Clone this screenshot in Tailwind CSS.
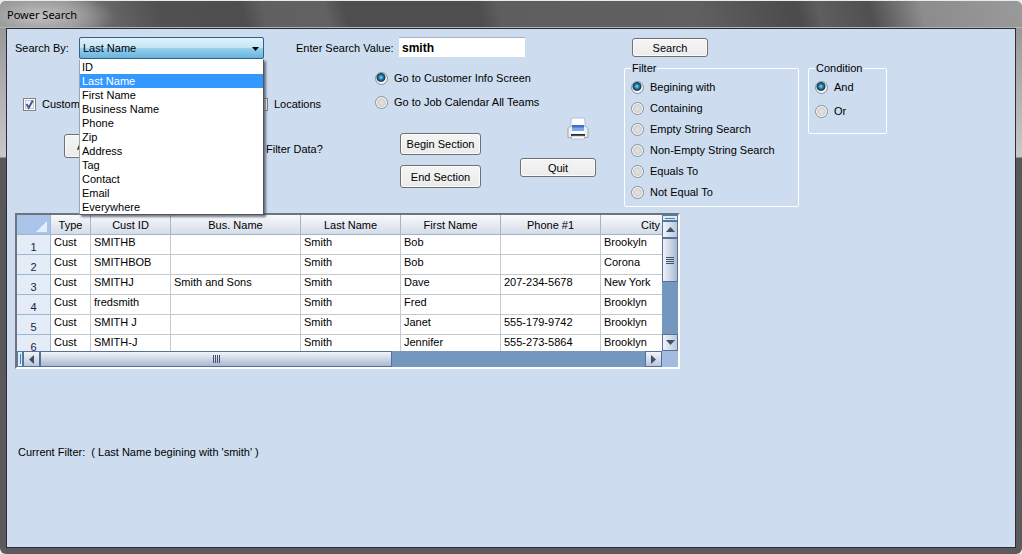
<!DOCTYPE html>
<html lang="en">
<head>
<meta charset="utf-8">
<title>Power Search</title>
<script src="https://cdn.jsdelivr.net/npm/@tailwindcss/browser@4"></script>
</head>
<body class="bg-[#e8eceb] pt-px font-['Liberation_Sans',Arial,sans-serif] text-[11px] leading-[14px] text-black">
<div class="flex min-h-[calc(100vh-1px)] flex-col rounded-md bg-[linear-gradient(#8f8f8f_0,#c8c8c8_156px,#585858_157px,#5c5a5c_100%)] px-[6px] pb-[6px]">
  <header class="-mx-[6px] flex h-[27px] items-center rounded-t-md border-b border-[#b4b4b4] bg-[radial-gradient(ellipse_75px_26px_at_40px_15px,#c0c0c0_0,#a8a8a8cc_50%,#80808000_100%),linear-gradient(75deg,#8c8c8c_0,#888888_7%,#6a6a6a_10%,#505050_16%,#4e4e4e_24%,#606060_26%,#626262_32%,#4e4e4e_34%,#4e4e4e_47%,#5e5e5e_49%,#606060_68%,#4c4c4c_77%,#4c4c4c_78%,#5e5e5e_80%,#505050_85%,#8c8c8c_90%,#9a9a9a_100%)] pt-px pl-[7px]">
    <h1 class="font-['Noto_Sans',sans-serif] text-[11px]">Power Search</h1>
  </header>

  <main class="flex grow flex-col border border-[#2a2e33] bg-[#cdddef] px-2 pt-2">
    <div class="flex">
      <section class="w-[609px] shrink-0">
        <div class="flex h-[22px] items-center">
          <label for="by" class="w-16">Search By:</label>
          <div class="relative w-[185px]">
            <select id="by" class="block h-[22px] w-full appearance-none rounded-[2px] border border-[#2c628b] bg-[linear-gradient(#e0f1fa_0,#c4e5f6_48%,#98d1ef_52%,#68b3db_100%)] pl-[3px]">
              <option>Last Name</option>
            </select>
            <svg class="pointer-events-none absolute right-[5px] top-[10px] h-[4px] w-[7px]" viewBox="0 0 7 4"><path d="M0 0h7L3.500 4z"/></svg>
            <ul role="listbox" aria-label="Search fields" class="absolute left-0 top-[22px] z-10 w-full border border-[#555] border-t-white border-l-[#9aa] bg-white shadow-[2px_2px_2px_rgba(60,70,90,0.7)]">
              <li role="option" class="pl-[2px]">ID</li>
              <li role="option" aria-selected="true" class="bg-[#3399ff] pl-[2px] text-white">Last Name</li>
              <li role="option" class="pl-[2px]">First Name</li>
              <li role="option" class="pl-[2px]">Business Name</li>
              <li role="option" class="pl-[2px]">Phone</li>
              <li role="option" class="pl-[2px]">Zip</li>
              <li role="option" class="pl-[2px]">Address</li>
              <li role="option" class="pl-[2px]">Tag</li>
              <li role="option" class="pl-[2px]">Contact</li>
              <li role="option" class="pl-[2px]">Email</li>
              <li role="option" class="pl-[2px]">Everywhere</li>
            </ul>
          </div>
          <label for="value" class="ml-8 w-[103px]">Enter Search Value:</label>
          <input id="value" type="text" value="smith" class="mb-[2px] h-5 w-[126px] border-t border-[#a9b4c2] bg-white px-[3px] text-[12px] font-bold">
        </div>

        <div class="flex">
          <div class="w-[360px] shrink-0 pt-[38px] pl-2">
            <div class="flex items-center">
              <label class="flex w-[232px] items-center gap-[6px]"><span class="relative flex size-[13px]"><input type="checkbox" checked class="size-[13px] appearance-none border border-[#7e8287] bg-[#f4f4f4] shadow-[inset_0_0_0_1px_#fff,inset_0_0_0_2px_#c4c8cc]"><svg class="pointer-events-none absolute inset-0" viewBox="0 0 13 13"><path d="M3.500 6l2.200 3.800L9.800 2.500" fill="none" stroke="#43579b" stroke-width="1.900"/></svg></span>Customers</label>
              <label class="flex items-center gap-[6px]"><input type="checkbox" class="size-[13px] appearance-none border border-[#7e8287] bg-[#f4f4f4] shadow-[inset_0_0_0_1px_#fff,inset_0_0_0_2px_#c4c8cc]">Locations</label>
            </div>
            <div class="mt-[23px] flex items-center">
              <button class="ml-[41px] h-6 w-[75px] rounded-[3px] border border-[#707070] bg-[linear-gradient(#f4f4f4,#f0f0f0_50%,#ebebeb)] shadow-[inset_0_0_0_1px_#fcfcfc]">Advanced</button>
              <span class="ml-[127px] pt-[6px]">Filter Data?</span>
            </div>
          </div>

          <div class="w-[145px] shrink-0 pt-[12px]">
            <label class="flex h-[14px] items-center gap-[6px] whitespace-nowrap"><input type="radio" name="go" checked class="size-[13px] shrink-0 appearance-none rounded-full border border-[#8a8f94] bg-[radial-gradient(circle_at_45%_40%,#8fe0f8_0,#2a84b0_2px,#0d3d5c_4px,#f4f4f4_5px)]">Go to Customer Info Screen</label>
            <label class="mt-[10px] flex h-[14px] items-center gap-[6px] whitespace-nowrap"><input type="radio" name="go" class="size-[13px] shrink-0 appearance-none rounded-full border border-[#8a8f94] bg-[radial-gradient(circle,#e6e6e6_0,#d2d2d2_4px,#f6f6f6_5px)]">Go to Job Calendar All Teams</label>
            <button class="mt-[24px] ml-[25px] block h-[22px] w-[81px] rounded-[3px] border border-[#707070] bg-[linear-gradient(#f4f4f4,#f0f0f0_50%,#ebebeb)] shadow-[inset_0_0_0_1px_#fcfcfc]">Begin Section</button>
            <button class="mt-[10px] ml-[25px] block h-[23px] w-[81px] rounded-[3px] border border-[#707070] bg-[linear-gradient(#f4f4f4,#f0f0f0_50%,#ebebeb)] shadow-[inset_0_0_0_1px_#fcfcfc]">End Section</button>
          </div>

          <div class="pt-[58px]">
            <button aria-label="Print" class="ml-[47px] block">
              <svg class="h-[23px] w-[22px]" viewBox="0 0 22 23">
                <path d="M4.500 1h13l1 9h-15z" fill="#fafcff" stroke="#a9b6c8" stroke-width=".8"/>
                <path d="M1 11.500L3.500 9h15l2.500 2.500v9H1z" fill="#eceef2" stroke="#9298a2" stroke-width=".8"/>
                <path d="M5 8h12v6H5z" fill="#7aa9ee"/><path d="M5 8h12v2.500H5z" fill="#3e6fc4"/>
                <path d="M4 14h14v2.500H4z" fill="#fff"/><path d="M4 17h14v2H4z" fill="#2c2e33"/>
                <path d="M4.500 19h13v3h-13z" fill="#f7f8fa" stroke="#a3a8b0" stroke-width=".6"/>
              </svg>
            </button>
            <button class="mt-[18px] block h-[19px] w-[76px] rounded-[3px] border border-[#707070] bg-[linear-gradient(#f4f4f4,#f0f0f0_50%,#ebebeb)] shadow-[inset_0_0_0_1px_#fcfcfc]">Quit</button>
          </div>
        </div>
      </section>

      <section>
        <button class="mt-px ml-2 block h-[19px] w-[76px] rounded-[3px] border border-[#707070] bg-[linear-gradient(#f4f4f4,#f0f0f0_50%,#ebebeb)] shadow-[inset_0_0_0_1px_#fcfcfc]">Search</button>
        <div class="mt-[4px] flex items-start gap-[9px]">
          <fieldset class="h-[146px] w-[175px] rounded-[2px] border border-white pl-[6px]">
            <legend class="px-px">Filter</legend>
            <div class="flex flex-col gap-[7px] pt-[5px]">
              <label class="flex h-[14px] items-center gap-[6px]"><input type="radio" name="f" checked class="size-[13px] appearance-none rounded-full border border-[#8a8f94] bg-[radial-gradient(circle_at_45%_40%,#8fe0f8_0,#2a84b0_2px,#0d3d5c_4px,#f4f4f4_5px)]">Begining with</label>
              <label class="flex h-[14px] items-center gap-[6px]"><input type="radio" name="f" class="size-[13px] appearance-none rounded-full border border-[#8a8f94] bg-[radial-gradient(circle,#e6e6e6_0,#d2d2d2_4px,#f6f6f6_5px)]">Containing</label>
              <label class="flex h-[14px] items-center gap-[6px]"><input type="radio" name="f" class="size-[13px] appearance-none rounded-full border border-[#8a8f94] bg-[radial-gradient(circle,#e6e6e6_0,#d2d2d2_4px,#f6f6f6_5px)]">Empty String Search</label>
              <label class="flex h-[14px] items-center gap-[6px]"><input type="radio" name="f" class="size-[13px] appearance-none rounded-full border border-[#8a8f94] bg-[radial-gradient(circle,#e6e6e6_0,#d2d2d2_4px,#f6f6f6_5px)]">Non-Empty String Search</label>
              <label class="flex h-[14px] items-center gap-[6px]"><input type="radio" name="f" class="size-[13px] appearance-none rounded-full border border-[#8a8f94] bg-[radial-gradient(circle,#e6e6e6_0,#d2d2d2_4px,#f6f6f6_5px)]">Equals To</label>
              <label class="flex h-[14px] items-center gap-[6px]"><input type="radio" name="f" class="size-[13px] appearance-none rounded-full border border-[#8a8f94] bg-[radial-gradient(circle,#e6e6e6_0,#d2d2d2_4px,#f6f6f6_5px)]">Not Equal To</label>
            </div>
          </fieldset>
          <fieldset class="h-[73px] w-[79px] rounded-[2px] border border-white pl-[6px]">
            <legend class="px-px">Condition</legend>
            <div class="flex flex-col gap-[10px] pt-[5px]">
              <label class="flex h-[14px] items-center gap-[6px]"><input type="radio" name="c" checked class="size-[13px] appearance-none rounded-full border border-[#8a8f94] bg-[radial-gradient(circle_at_45%_40%,#8fe0f8_0,#2a84b0_2px,#0d3d5c_4px,#f4f4f4_5px)]">And</label>
              <label class="flex h-[14px] items-center gap-[6px]"><input type="radio" name="c" class="size-[13px] appearance-none rounded-full border border-[#8a8f94] bg-[radial-gradient(circle,#e6e6e6_0,#d2d2d2_4px,#f6f6f6_5px)]">Or</label>
            </div>
          </fieldset>
        </div>
      </section>
    </div>

    <div class="mt-[6px] w-[665px] border-2 border-t-[#6d7480] border-l-[#6d7480] border-r-white border-b-white">
      <div class="flex h-[136px]">
        <div class="w-[645px] overflow-hidden bg-white">
          <table class="w-[684px] table-fixed border-separate border-spacing-0 text-left
            [&_td]:h-5 [&_td]:border-r [&_td]:border-b [&_td]:border-[#c3cbd0] [&_td]:pl-[3px] [&_td]:pb-[5px] [&_td]:align-top
            [&_tbody_th]:h-5 [&_tbody_th]:border-r [&_tbody_th]:border-b [&_tbody_th]:border-[#9eb6ce] [&_tbody_th]:bg-[#e4ecf7] [&_tbody_th]:pt-[4px] [&_tbody_th]:text-center [&_tbody_th]:font-normal [&_tbody_th]:text-[#1c2340]
            [&_thead_th]:h-5 [&_thead_th]:border-r [&_thead_th]:border-b [&_thead_th]:border-[#9eb6ce] [&_thead_th]:bg-linear-to-b [&_thead_th]:from-[#f8fafc] [&_thead_th]:to-[#d5dce8] [&_thead_th]:text-center [&_thead_th]:font-normal">
            <colgroup><col class="w-[34px]"><col class="w-10"><col class="w-20"><col class="w-[130px]"><col class="w-[100px]"><col class="w-[100px]"><col class="w-[100px]"><col class="w-[100px]"></colgroup>
            <thead><tr>
              <th><svg class="block h-[19px] w-[33px]" viewBox="0 0 33 19"><path d="M0 0h33v19H0z" fill="#a9c4e9"/><path d="M30 6v11H19z" fill="#e6eefb"/></svg></th>
              <th>Type</th><th>Cust ID</th><th>Bus. Name</th><th>Last Name</th><th>First Name</th><th>Phone #1</th><th>City</th>
            </tr></thead>
            <tbody>
              <tr><th>1</th><td>Cust</td><td>SMITHB</td><td></td><td>Smith</td><td>Bob</td><td></td><td>Brookyln</td></tr>
              <tr><th>2</th><td>Cust</td><td>SMITHBOB</td><td></td><td>Smith</td><td>Bob</td><td></td><td>Corona</td></tr>
              <tr><th>3</th><td>Cust</td><td>SMITHJ</td><td>Smith and Sons</td><td>Smith</td><td>Dave</td><td>207-234-5678</td><td>New York</td></tr>
              <tr><th>4</th><td>Cust</td><td>fredsmith</td><td></td><td>Smith</td><td>Fred</td><td></td><td>Brooklyn</td></tr>
              <tr><th>5</th><td>Cust</td><td>SMITH J</td><td></td><td>Smith</td><td>Janet</td><td>555-179-9742</td><td>Brooklyn</td></tr>
              <tr><th>6</th><td>Cust</td><td>SMITH-J</td><td></td><td>Smith</td><td>Jennifer</td><td>555-273-5864</td><td>Brooklyn</td></tr>
            </tbody>
          </table>
        </div>
        <div class="flex w-4 flex-col bg-[#7497c0]">
          <div class="flex h-[6px] items-center border border-[#4f7ca3] bg-[#d9ecfa] px-[2px]"><div class="h-px w-full bg-[#4f7ca3]"></div></div>
          <button aria-label="Scroll up" class="flex h-[17px] items-center justify-center border border-[#56709a] bg-linear-to-r from-[#f2f5f9] to-[#b9c7db]"><svg class="h-[5px] w-[9px]" viewBox="0 0 9 5"><path d="M4.500 0L9 5H0z" fill="#43506a"/></svg></button>
          <div class="flex h-[44px] flex-col items-center justify-center gap-px border border-[#56709a] bg-linear-to-r from-[#f2f5f9] to-[#a9b9d1]"><i class="h-px w-2 bg-[#43506a]"></i><i class="h-px w-2 bg-[#43506a]"></i><i class="h-px w-2 bg-[#43506a]"></i><i class="h-px w-2 bg-[#43506a]"></i></div>
          <button aria-label="Scroll down" class="mt-auto flex h-[17px] items-center justify-center border border-[#56709a] bg-linear-to-r from-[#f2f5f9] to-[#b9c7db]"><svg class="h-[5px] w-[9px]" viewBox="0 0 9 5"><path d="M0 0h9L4.500 5z" fill="#43506a"/></svg></button>
        </div>
      </div>
      <div class="flex h-[16px] bg-[#7497c0]">
        <div class="flex w-[6px] justify-center border border-[#4f7ca3] bg-[#d9ecfa] py-[2px]"><div class="h-full w-px bg-[#4f7ca3]"></div></div>
        <button aria-label="Scroll left" class="flex w-[17px] items-center justify-center border border-[#56709a] bg-linear-to-b from-[#f2f5f9] to-[#b9c7db]"><svg class="h-[9px] w-[5px]" viewBox="0 0 5 9"><path d="M5 0v9L0 4.500z" fill="#43506a"/></svg></button>
        <div class="flex w-[352px] items-center justify-center gap-px border border-[#56709a] bg-linear-to-b from-[#f2f5f9] to-[#a9b9d1]"><i class="h-2 w-px bg-[#43506a]"></i><i class="h-2 w-px bg-[#43506a]"></i><i class="h-2 w-px bg-[#43506a]"></i><i class="h-2 w-px bg-[#43506a]"></i></div>
        <button aria-label="Scroll right" class="ml-auto flex w-[17px] items-center justify-center border border-[#56709a] bg-linear-to-b from-[#f2f5f9] to-[#b9c7db]"><svg class="h-[9px] w-[5px]" viewBox="0 0 5 9"><path d="M0 0v9l5-4.500z" fill="#43506a"/></svg></button>
        <div class="w-4 bg-[#a3bbe0]"></div>
      </div>
    </div>

    <p class="mt-[76px] pl-[3px] whitespace-pre">Current Filter:  ( Last Name begining with 'smith' )</p>
  </main>
</div>
</body>
</html>
